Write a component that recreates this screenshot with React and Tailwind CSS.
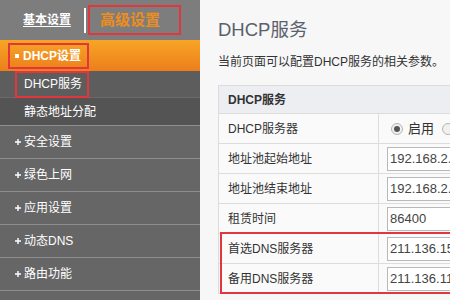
import React from "react";

const FONT = { fontFamily: '"Liberation Sans", "Noto Sans CJK SC", sans-serif' };

const menu = ["安全设置", "绿色上网", "应用设置", "动态DNS", "路由功能", "系统工具"];

function Plus() {
  return (
    <svg width="6" height="6" viewBox="0 0 6 6" className="shrink-0">
      <path d="M0 3h6M3 0v6" stroke="#fff" strokeWidth="1.4" />
    </svg>
  );
}

function Sidebar() {
  return (
    <div className="w-[200px] h-[300px] shrink-0 flex flex-col bg-[#666666] overflow-hidden">
      {/* tabs */}
      <div className="h-[40px] shrink-0 flex items-center bg-[#7d7d7d]">
        <span className="ml-[23px] text-[12px] font-bold text-white underline underline-offset-2">基本设置</span>
        <div className="ml-[13px] w-[2px] h-[25px] bg-white" />
        <div className="ml-[2px] w-[93px] h-[30px] border-2 border-[#e2363c] flex items-center pl-[10px]">
          <span className="text-[15px] font-bold text-[#ee8d1e]">高级设置</span>
        </div>
      </div>

      {/* active group */}
      <div className="h-[31px] shrink-0 flex items-center bg-gradient-to-b from-[#f7a526] to-[#ec7e1b]">
        <div className="ml-[8px] w-[81px] h-[26px] border-2 border-[#e2363c] flex items-center pl-[5px] gap-[4px]">
          <span className="w-[4px] h-[4px] bg-white" />
          <span className="text-[12px] font-bold text-white">DHCP设置</span>
        </div>
      </div>
      <div className="h-[27px] shrink-0 flex items-center bg-[#5d5d5d] border-b border-[#6a6a6a]">
        <div className="ml-[15px] w-[74px] h-[27px] border-2 border-[#e2363c] flex items-center pl-[7px]">
          <span className="text-[12px] text-white">DHCP服务</span>
        </div>
      </div>
      <div className="h-[27px] shrink-0 flex items-center bg-[#545454] pl-[24px]">
        <span className="text-[12px] text-white">静态地址分配</span>
      </div>

      {menu.map((m) => (
        <div key={m} className="h-[33px] shrink-0 flex items-center gap-[3px] pl-[15px] border-t border-[#8e8e8e]">
          <Plus />
          <span className="text-[12px] text-white">{m}</span>
        </div>
      ))}
    </div>
  );
}

function Row({ label, children }) {
  return (
    <div className="h-[30px] shrink-0 flex border-t border-[#dcdcdc] bg-[#fafafa]">
      <div className="w-[160px] shrink-0 flex items-center pl-[9px] border-r border-[#dcdcdc] text-[12px] text-[#333]">
        {label}
      </div>
      <div className="flex-1 flex items-center pl-[8px]">{children}</div>
    </div>
  );
}

function Input({ value }) {
  return (
    <div className="h-[24px] w-[150px] shrink-0 bg-white border border-[#b9b9b9] flex items-center pl-[2px] text-[13px] text-[#444] whitespace-nowrap">
      {value}
    </div>
  );
}

function Radio({ checked }) {
  return (
    <span className="w-[12px] h-[12px] shrink-0 rounded-full border border-[#b5b5b5] bg-[#f0f0f0] flex items-center justify-center">
      {checked && <span className="w-[6px] h-[6px] rounded-full bg-[#555]" />}
    </span>
  );
}

export default function App() {
  return (
    <div className="w-[450px] h-[300px] flex overflow-hidden" style={FONT}>
      <Sidebar />
      <div className="flex-1 min-w-0 bg-[#f7f7f8] pl-[18px] overflow-hidden">
        <div className="pt-[19px] text-[18.5px] leading-[22px] text-[#5a616b]">DHCP服务</div>
        <div className="mt-[13px] text-[12px] leading-[16px] text-[#333] whitespace-nowrap">当前页面可以配置DHCP服务的相关参数。</div>

        <div className="mt-[15px] w-[300px] border border-[#dcdcdc]">
          <div className="h-[27px] flex items-center pl-[9px] bg-[#eceef2] text-[12px] font-bold text-[#333]">DHCP服务</div>
          <Row label="DHCP服务器">
            <div className="flex items-center gap-[5px] pl-[4px] text-[13px] text-[#333]">
              <Radio checked />
              <span>启用</span>
              <span className="ml-[3px]"><Radio /></span>
            </div>
          </Row>
          <Row label="地址池起始地址"><Input value="192.168.2.100" /></Row>
          <Row label="地址池结束地址"><Input value="192.168.2.199" /></Row>
          <Row label="租赁时间"><Input value="86400" /></Row>
          <div className="relative">
            <Row label="首选DNS服务器"><Input value="211.136.150.66" /></Row>
            <Row label="备用DNS服务器"><Input value="211.136.112.50" /></Row>
            <div className="absolute left-[1px] -top-[1px] w-[300px] h-[62px] border-2 border-[#e2363c]" />
          </div>
        </div>
      </div>
    </div>
  );
}
